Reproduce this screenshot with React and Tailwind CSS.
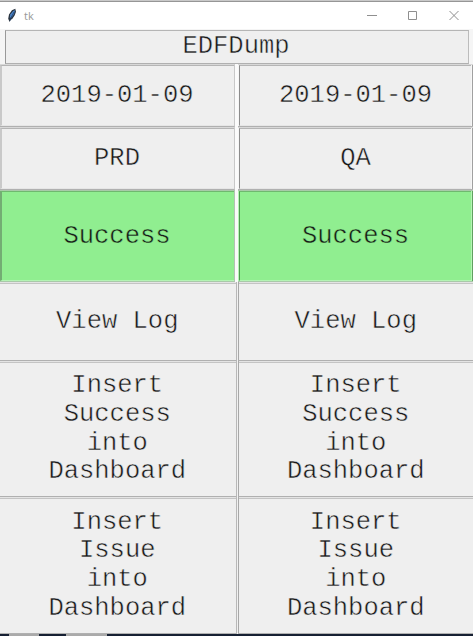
import React from "react";

function Field({ green, children }) {
  const tone = green
    ? "bg-[#90ee90] border-t-[#6fb96f] border-b-[#b4f4b4] [-webkit-text-stroke:0.45px_#90ee90]"
    : "bg-[#efefef] border-t-[#b5b5b5] border-b-[#e6e6e6]";
  const left = green ? "border-l-[#73ad73]" : "border-l-[#c9c9c9]";
  const leftDark = green ? "border-l-[#4f9a4f]" : "border-l-[#8c8c8c]";
  const outer = green ? "border-y-[#a9c9a9] border-r-[#b2c4b2]" : "border-t-[#d8d8d8] border-b-[#b0b0b0] border-r-[#c8c8c8]";
  const edge = green ? "bg-[#5fa05f]" : "bg-[#a0a0a0]";
  return (
    <>
      <div className={`w-[235px] border-y border-r ${outer}`}>
        <div className={`flex h-full items-center justify-center border-y border-l-2 pr-[2px] pt-[2px] ${tone} ${left}`}>{children[0]}</div>
      </div>
      <div className="w-[3px] bg-[#fbfbfb]" />
      <div className={`w-[235px] border-y ${outer}`}>
        <div className={`flex h-full ${green ? "bg-[#b4f4b4]" : "bg-[#f6f6f6]"}`}>
          <div className="w-px" />
          <div className={`flex flex-1 items-center justify-center border-y border-l pt-[2px] ${tone} ${leftDark}`}>{children[1]}</div>
          <div className="w-px" />
          <div className={`w-px ${edge}`} />
        </div>
      </div>
    </>
  );
}

function ButtonCell({ lines, right }) {
  return (
    <div
      className={`flex flex-1 flex-col items-center justify-center border-b border-b-[#b0b0b0] bg-[#efefef] pt-[2px] shadow-[inset_0_1px_0_#e4e4e4,inset_0_2px_0_#c4c4c4] ${
        right ? "border-l border-l-[#a8a8a8]" : "border-r border-r-[#b8b8b8] pr-px"
      }`}
    >
      {lines.map((line) => (
        <span key={line} className="block h-[28.75px]">{line}</span>
      ))}
    </div>
  );
}

function ButtonRow({ lines, height }) {
  return (
    <div className={`flex ${height}`}>
      <ButtonCell lines={lines} />
      <div className="w-px bg-[#f1f1f1]" />
      <ButtonCell lines={lines} right />
    </div>
  );
}

function Feather() {
  return (
    <svg width="12" height="15" viewBox="0 0 12 15" className="ml-[7px]">
      <path d="M2.6 13.9 1.2 10.8 2 6.6 4.9 2.2 8.3.8 9 3.7 7.6 7.6 5.2 11 3.7 11.8Z" fill="#2a3440" />
      <path d="M2.8 9.8 3.3 6.4 6.2 2.9 8 2.2 7 5.9 4.6 9.6Z" fill="#4b86cc" />
      <path d="M3.2 12.5 4.3 9.1 7.2 3.8" fill="none" stroke="#1d3d6b" strokeWidth=".8" />
    </svg>
  );
}

export default function App() {
  return (
    <div className="flex h-[636px] w-[473px] flex-col overflow-hidden bg-[#efefef] font-['Courier_New','Liberation_Mono',monospace] text-[25.5px] leading-[28.75px] text-[#181818] [-webkit-text-stroke:0.45px_#efefef]">
      <div className="flex h-[29px] shrink-0 items-center border-t border-t-[#c9c9c9] bg-white shadow-[inset_0_1px_0_#969696]">
        <Feather />
        <span className="ml-[5px] mt-px font-['Open_Sans','Noto_Sans',sans-serif] text-[11px] leading-none text-[#999] [-webkit-text-stroke:0]">tk</span>
        <svg width="96" height="12" viewBox="0 0 96 12" className="ml-auto mr-[12px]" fill="none" stroke="#8f8f8f">
          <path d="M2 6.5H12" />
          <path d="M43.5 2.5H51.5V10.5H43.5Z" />
          <path d="M84.5 2 93.5 11M93.5 2 84.5 11" />
        </svg>
      </div>
      <div className="flex h-[35px] shrink-0 bg-[#f5f5f5] pl-[5px] pr-[4px] pt-px">
        <div className="flex flex-1 items-center justify-center border border-t-[#b5b5b5] border-r-[#bcbcbc] border-b-[#b0b0b0] border-l-[#999] bg-[#efefef] pr-[2px] pt-px">
          EDFDump
        </div>
      </div>
      <div className="flex h-[63px]"><Field>{["2019-01-09", "2019-01-09"]}</Field></div>
      <div className="flex h-[63px]"><Field>{["PRD", "QA"]}</Field></div>
      <div className="flex h-[92px]"><Field green>{["Success", "Success"]}</Field></div>
      <ButtonRow height="h-[79px]" lines={["View Log"]} />
      <ButtonRow height="h-[136px]" lines={["Insert", "Success", "into", "Dashboard"]} />
      <ButtonRow height="h-[137px]" lines={["Insert", "Issue", "into", "Dashboard"]} />
      <div className="flex h-[2px] shrink-0 bg-[#162033]">
        <div className="ml-[9px] w-[30px] bg-[#aaa]" />
        <div className="ml-[27px] w-[41px] bg-[#aaa]" />
      </div>
    </div>
  );
}
